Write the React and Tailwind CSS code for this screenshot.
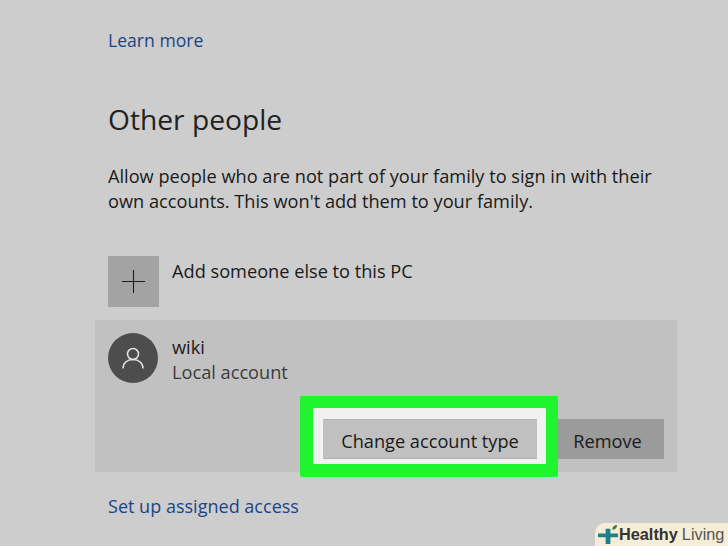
import React from "react";

function UserIcon() {
  return (
    <svg width="22" height="22" viewBox="0 0 22 22" fill="none" stroke="#e6e6e6" strokeWidth="1.5">
      <circle cx="11" cy="7" r="5.5" />
      <path d="M1 21.5c0-5.5 4-9 10-9s10 3.5 10 9" />
    </svg>
  );
}

export default function App() {
  return (
    <div className="relative w-[728px] h-[546px] overflow-hidden bg-[#cdcdcd] text-[#1a1a1a] font-['Open_Sans',sans-serif]">
      <div className="pt-[27px] pl-[108px]">
        <div className="text-[17.6px] leading-[26px] text-[#1a4585]">Learn more</div>
        <div className="mt-[45px] text-[28.2px] leading-[42px] text-[#222]">Other people</div>
        <div className="mt-[24px] text-[18.2px] leading-[25px] w-[580px]">
          <div>Allow people who are not part of your family to sign in with their</div>
          <div>own accounts. This won't add them to your family.</div>
        </div>
        <div className="mt-[42px] flex gap-[13px] items-start">
          <div className="w-[51px] h-[51px] bg-[#a3a3a3] flex items-center justify-center">
            <svg width="23" height="23" viewBox="0 0 23 23" stroke="#1c1c1c" strokeWidth="1.1">
              <path d="M11.5 0v23M0 11.5h23" />
            </svg>
          </div>
          <div className="text-[18.2px] leading-[26px] mt-[2px]">Add someone else to this PC</div>
        </div>
      </div>
      <div className="mt-[13px] ml-[95px] w-[582px] h-[152px] bg-[#c1c1c1] pt-[13px] px-[13px]">
        <div className="flex gap-[14px] items-start h-[50px]">
          <div className="w-[50px] h-[50px] rounded-full bg-[#4d4d4d] flex items-center justify-center">
            <UserIcon />
          </div>
          <div className="pt-[2px]">
            <div className="text-[18.2px] leading-[25px]">wiki</div>
            <div className="text-[18.2px] leading-[25px] text-[#3c3c3c]">Local account</div>
          </div>
        </div>
        <div className="mt-[36px] flex justify-end">
          <div className="relative z-10 w-[214px] h-[40px]">
            <div className="absolute left-[-23px] top-[-23px] w-[258px] h-[81px] bg-[#1ef52f] rounded-[2px]" />
            <div className="absolute left-[-10px] top-[-11px] w-[233px] h-[56px] bg-[#f1f1f1]" />
            <div className="relative w-[214px] h-[40px] bg-[#c0c0c0] border-y border-[#b0b0b0] flex items-center justify-center text-[18.2px] pt-[5px]">
              Change account type
            </div>
          </div>
          <div className="w-[127px] h-[40px] bg-[#9b9b9b] flex items-center justify-center text-[18.2px] pl-[14px] pt-[5px]">
            Remove
          </div>
        </div>
      </div>
      <div className="mt-[21px] pl-[108px] text-[18.05px] leading-[26px] text-[#1a4585]">Set up assigned access</div>
      <div className="absolute right-0 bottom-0 w-[133px] h-[23px] bg-[#f5edd6] rounded-tl-[10px] flex items-center pl-[3px] font-['Liberation_Sans',sans-serif]">
        <svg width="21" height="21" viewBox="0 0 22 22" className="shrink-0">
          <path d="M8 5h5v5h8v4h-8v7H8v-7H0v-4h8z" fill="#1f7f8c" />
          <path d="M15 6c0-3 2-5 5-5 0 3-2 5-5 5z" fill="#3f7f3a" />
        </svg>
        <span className="text-[16.3px] font-bold text-[#333] leading-none">Healthy</span>
        <span className="text-[16.3px] text-[#555] leading-none ml-[4px]">Living</span>
      </div>
    </div>
  );
}
